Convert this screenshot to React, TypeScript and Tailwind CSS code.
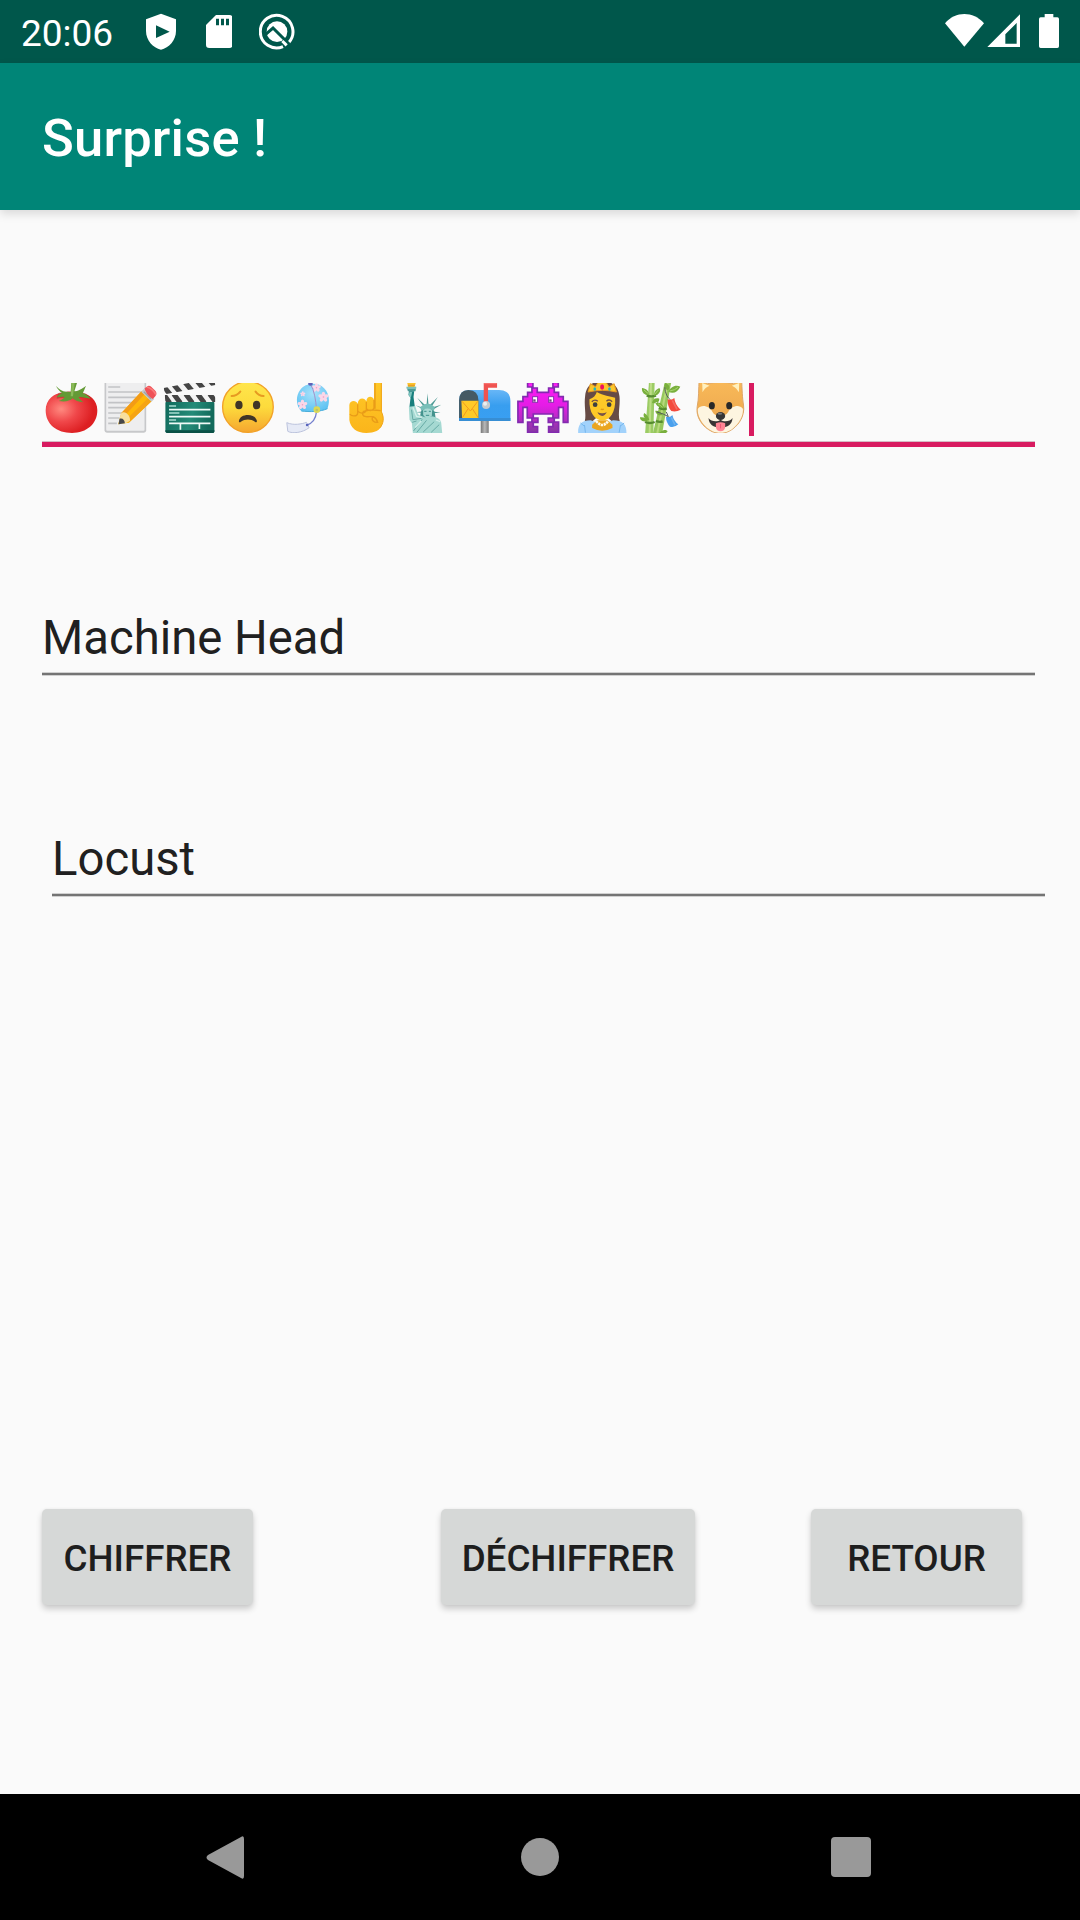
import React from "react";

function Emoji({ vb, children, label }: { vb: string; label: string; children: React.ReactNode }) {
  return (
    <svg viewBox={vb} role="img" aria-label={label} className="block h-[50px] w-[58.8px] shrink-0">
      {children}
    </svg>
  );
}

function Tomato() {
  return (
    <Emoji vb="36 39 176.4 150" label="tomato">
      <defs>
        <radialGradient id="tom" cx="0.3" cy="0.42" r="0.62">
          <stop offset="0" stopColor="#ff8a80" />
          <stop offset="0.5" stopColor="#f0474a" />
          <stop offset="1" stopColor="#dd1f22" />
        </radialGradient>
      </defs>
      <path d="M47 121C47 88 73 69 98 68C110 64 132 64 147 68C177 70 202 89 202 121C202 162 170 189 126 189C81 189 47 164 47 121Z" fill="url(#tom)" />
      <path d="M84 70C100 64 140 62 166 70C176 77 180 80 183 86C150 80 110 80 80 86Z" fill="#9c2a1c" opacity="0.45" />
      <path d="M78 48C88 58 98 66 110 65L122 66L124 39H141L133 64C142 64 156 57 168 47C163 60 160 66 158 70C168 72 177 80 182 86C167 84 157 80 146 81C149 87 154 92 160 97C146 96 135 91 128 85C119 94 104 96 86 93C94 90 101 86 104 81C96 80 87 81 79 82C84 75 91 71 96 69C88 63 82 56 78 48Z" fill="#639a35" />
      <path d="M125 39H134L129 79H122Z" fill="#8ab957" />
    </Emoji>
  );
}

function Memo() {
  return (
    <Emoji vb="212.4 39 176.4 150" label="memo">
      <rect x="223" y="25" width="125" height="163" rx="7" fill="#c7c8ca" />
      <rect x="228" y="25" width="115" height="157" rx="3" fill="#eeeeef" />
      <path d="M234 51H270M234 66H333M234 82H318M234 98H305M234 113H290M234 129H276M234 144H268M234 160H260" stroke="#c2c3c6" strokeWidth="5" />
      <path d="M334 64L364 94L296 158L264 163L273 130Z" fill="#ffb70a" />
      <path d="M334 64L343 73L282 139L273 130Z" fill="#f39b16" />
      <path d="M354 84L364 94L296 158L289 148Z" fill="#f5a414" />
      <path d="M273 130C284 120 302 137 299 153L286 160L266 163L267 149Z" fill="#f8df9d" />
      <path d="M268 146C277 143 284 150 284 160L265 163Z" fill="#474749" />
      <path d="M341 57L372 87L364 95L333 65Z" fill="#c5c9cb" />
      <path d="M341 65L362 86" stroke="#9ea4a7" strokeWidth="4" />
      <path d="M343 55L350 50C354 46 359 47 363 50L376 63C380 67 379 74 376 78L368 87C358 83 346 68 343 55Z" fill="#ef5258" />
      <path d="M350 51C364 55 372 63 377 74" fill="none" stroke="#fa7b7b" strokeWidth="5" />
    </Emoji>
  );
}

function Clapper() {
  return (
    <Emoji vb="388.8 39 176.4 150" label="clapper board">
      <defs>
        <linearGradient id="clap" x2="1" y2="0.2">
          <stop stopColor="#10695b" /><stop offset="0.6" stopColor="#248b78" /><stop offset="1" stopColor="#126a5b" />
        </linearGradient>
        <clipPath id="bar1"><path d="M400 54L550 24L555 45L404 73Z" /></clipPath>
        <clipPath id="bar2"><path d="M403 75H555V96H405Z" /></clipPath>
      </defs>
      <rect x="405" y="93" width="147" height="96" rx="6" fill="url(#clap)" />
      <path d="M405 181H552V185Q551 189 547 189H410Q406 189 405 184Z" fill="#0a5146" />
      <g clipPath="url(#bar1)">
        <path d="M395 20H560V80H395Z" fill="#f4f4f4" />
        <path d="M400 50L421 75M430 44L452 70M464 37L487 65M498 31L521 58M532 24L555 51" stroke="#444" strokeWidth="15" />
      </g>
      <g clipPath="url(#bar2)">
        <path d="M400 75H557V98H400Z" fill="#f4f4f4" />
        <path d="M399 72L418 99M430 72L450 99M466 72L486 99M502 72L522 99M538 72L558 99" stroke="#444" strokeWidth="15" />
      </g>
      <path d="M416 108H437M416 129H447M416 150H437" stroke="#a9ddd2" strokeWidth="5" />
      <path d="M416 119H540M416 140H540M416 160H540M450 160V179M507 160V177" stroke="#effaf7" strokeWidth="5" fill="none" />
    </Emoji>
  );
}

function Worried() {
  return (
    <Emoji vb="25.2 39 176.4 150" label="worried face">
      <defs>
        <linearGradient id="face" x2="0" y2="1">
          <stop stopColor="#ffe64d" /><stop offset="0.5" stopColor="#fddb3c" /><stop offset="1" stopColor="#f5a62f" />
        </linearGradient>
      </defs>
      <circle cx="115" cy="111" r="76" fill="url(#face)" stroke="#f2a127" strokeWidth="4" />
      <path d="M66 78Q82 78 92 65M138 65Q147 78 162 78" fill="none" stroke="#e79a21" strokeWidth="6" strokeLinecap="round" />
      <ellipse cx="88" cy="105" rx="11" ry="13" fill="#403527" />
      <ellipse cx="141" cy="105" rx="11" ry="13" fill="#403527" />
      <path d="M88 153C90 141 101 135 115 135C129 135 140 142 142 153C142 157 139 158 136 155C124 146 106 146 94 155C91 158 87 157 88 153Z" fill="#403527" />
    </Emoji>
  );
}

function Flower({ x, y, s = 1 }: { x: number; y: number; s?: number }) {
  return (
    <g transform={`translate(${x} ${y}) scale(${s})`} fill="#fad7e8">
      <ellipse cy="-8" rx="5.5" ry="8" />
      <ellipse cy="-8" rx="5.5" ry="8" transform="rotate(72)" />
      <ellipse cy="-8" rx="5.5" ry="8" transform="rotate(144)" />
      <ellipse cy="-8" rx="5.5" ry="8" transform="rotate(216)" />
      <ellipse cy="-8" rx="5.5" ry="8" transform="rotate(288)" />
      <circle r="2.5" fill="#ee9fc4" />
    </g>
  );
}

function WindChime() {
  return (
    <Emoji vb="201.6 39 176.4 150" label="wind chime">
      <defs>
        <radialGradient id="chime" cx="0.5" cy="0.35" r="0.65">
          <stop stopColor="#a9e2fb" /><stop offset="1" stopColor="#5fc3f2" />
        </radialGradient>
      </defs>
      <path d="M275 124C258 108 257 78 271 60C286 38 325 34 343 55C358 70 361 92 353 116C330 126 300 126 275 124Z" fill="url(#chime)" />
      <path d="M275 123C300 126 330 126 353 116" stroke="#48add9" strokeWidth="3" fill="none" />
      <Flower x={278} y={104} s={0.95} />
      <Flower x={341} y={81} s={1} />
      <Flower x={320} y={53} s={0.85} />
      <Flower x={279} y={72} s={0.5} />
      <path d="M302 42C314 62 318 92 320 116" fill="none" stroke="#a490c8" strokeWidth="3" />
      <ellipse cx="302" cy="42" rx="7" ry="5" fill="#5c60b8" />
      <path d="M320 126C318 146 306 160 292 165" fill="none" stroke="#7480ce" strokeWidth="4" />
      <circle cx="321" cy="119" r="10" fill="#dbd955" />
      <circle cx="321" cy="120" r="4" fill="#b8c46a" />
      <path d="M231 158C252 167 276 162 290 157L298 173C279 188 248 192 234 184Z" fill="#e6eaf6" stroke="#bcc3dc" strokeWidth="3" />
      <circle cx="292" cy="165" r="4" fill="#5964bd" />
    </Emoji>
  );
}

function PointingUp() {
  return (
    <Emoji vb="378 39 176.4 150" label="index pointing up">
      <defs>
        <linearGradient id="hand" x2="0" y2="1">
          <stop stopColor="#ffca28" /><stop offset="1" stopColor="#fbb51b" />
        </linearGradient>
      </defs>
      <path d="M492 25H516V128C521 139 522 151 517 162C512 181 493 189 469 189C440 189 421 173 418 150L418 105C419 91 438 89 443 101C444 82 464 81 469 94C470 77 488 77 492 89Z" fill="url(#hand)" />
      <path d="M443 103V130C442 140 424 140 420 132M469 96V120C465 132 449 132 444 123M492 90V115C488 124 475 123 470 117M495 39V116M512 122C495 119 471 121 461 124C454 130 458 139 468 140C474 141 482 139 488 140C483 151 492 158 503 157C501 148 496 143 489 140" fill="none" stroke="#e99c18" strokeWidth="4" />
      <path d="M514 39V125C523 142 521 162 509 174" fill="none" stroke="#efa51c" strokeWidth="3" />
    </Emoji>
  );
}

function Liberty() {
  return (
    <Emoji vb="14.4 39 176.4 150" label="Statue of Liberty">
      <path d="M51 38L55 32H73L77 38L73 51H54Z" fill="#fdc52d" />
      <path d="M53 46H74" stroke="#e99d26" strokeWidth="4" />
      <path d="M49 50H78L76 64H53Z" fill="#4c9b96" />
      <path d="M49 54H78" stroke="#88c8c1" strokeWidth="5" />
      <path d="M56 64H72L70 81L74 112L57 117L61 83L55 75Z" fill="#187f7d" />
      <path d="M58 66H66L62 83L55 75Z" fill="#7ec5bf" />
      <path d="M112 70L115 106H109ZM81 83L107 107L102 112ZM143 81L123 112L117 107ZM76 106L106 116L103 121ZM153 104L125 121L121 114ZM76 127L103 124V129ZM151 128L125 130V124Z" fill="#4d9994" />
      <path d="M89 146C91 124 94 110 112 110C130 110 135 125 136 145Z" fill="#44938e" />
      <path d="M90 111Q112 90 134 111L131 123Q113 108 93 123Z" fill="#78bfb8" />
      <path d="M99 120Q112 110 126 120L125 136Q119 145 112 145Q104 143 99 135Z" fill="#a8d9d3" />
      <path d="M102 124H109M116 124H122M107 136H117" stroke="#3b918c" strokeWidth="3" />
      <path d="M56 110L75 108L83 132C88 138 96 137 104 142L125 139C144 143 151 149 153 158L156 189H68L65 160L58 149Z" fill="#a5d9d2" />
      <path d="M64 119L68 149L94 145M70 183L96 148M80 187L109 151M99 186L132 155M123 187L147 164M66 157L79 153" fill="none" stroke="#66aaa5" strokeWidth="3" />
      <path d="M68 112L79 139L95 142M75 173L93 153M137 150L150 155" fill="none" stroke="#d2efea" strokeWidth="4" />
    </Emoji>
  );
}

function Mailbox() {
  return (
    <Emoji vb="190.8 39 176.4 150" label="mailbox">
      <defs>
        <linearGradient id="post"><stop stopColor="#777" /><stop offset="0.5" stopColor="#b8b8b8" /><stop offset="1" stopColor="#7b7b7b" /></linearGradient>
        <linearGradient id="box" x2="0" y2="1"><stop stopColor="#67b6f7" /><stop offset="0.5" stopColor="#389eef" /><stop offset="1" stopColor="#399ff2" /></linearGradient>
      </defs>
      <path d="M271 145H295V189H271Z" fill="url(#post)" />
      <path d="M235 60H326C349 60 360 73 360 92V153H206V91Q207 60 235 60Z" fill="url(#box)" />
      <path d="M206 144H360V153H206Z" fill="#378ed4" />
      <path d="M206 91Q207 60 234 60Q264 61 264 91V144H206Z" fill="#455a64" />
      <path d="M213 92H264V144H215Z" fill="#ffca28" />
      <path d="M215 94L240 123L262 94M216 143L233 116M263 143L246 116" fill="none" stroke="#f09b1f" strokeWidth="3" />
      <path d="M280 36H320V53H293V103H280Z" fill="#ef5350" />
      <path d="M281 40H319" stroke="#f87370" strokeWidth="5" />
      <circle cx="287" cy="105" r="12" fill="#c6cbd0" />
      <circle cx="284" cy="101" r="6" fill="#eceff1" />
    </Emoji>
  );
}

function Alien() {
  return (
    <Emoji vb="367.2 39 176.4 150" label="alien monster">
      <defs>
        <linearGradient id="alien" x1="0" y1="39" x2="0" y2="189" gradientUnits="userSpaceOnUse">
          <stop stopColor="#ff1cf5" /><stop offset="0.45" stopColor="#e51ce6" /><stop offset="1" stopColor="#843aa0" />
        </linearGradient>
      </defs>
      <path d="M414 37H430V54H443V67H477V54H490V37H506V51H494V67H507V80H521V94H535V157H521V112H507V144H494V156H507V187H477V170H490V157H476V144H490V132H431V144H445V157H431V170H444V187H414V156H427V144H413V112H400V157H385V94H400V80H414V67H427V51H414Z" fill="url(#alien)" stroke="#832ab0" strokeWidth="5" />
      <rect x="429" y="80" width="15" height="17" fill="#fff" stroke="#8b30af" strokeWidth="3" />
      <rect x="477" y="80" width="15" height="17" fill="#fff" stroke="#8b30af" strokeWidth="3" />
      <rect x="431" y="88" width="7" height="7" fill="#754083" />
      <rect x="479" y="88" width="7" height="7" fill="#754083" />
    </Emoji>
  );
}

function Princess() {
  return (
    <Emoji vb="3.6 39 176.4 150" label="princess">
      <path d="M45 154C50 132 42 108 46 78C49 47 67 34 97 34C128 34 145 47 149 79C152 107 143 133 150 154H126L115 144H79L68 154Z" fill="#674b45" />
      <path d="M25 189C24 162 36 151 62 151L97 163L130 151C158 151 170 163 170 189Z" fill="#a2d2fb" />
      <path d="M44 165L47 188M152 165L148 188M32 159L43 168M163 159L152 168" stroke="#75b7ed" strokeWidth="3" />
      <path d="M67 164L82 151H113L128 164V174Q97 190 67 174Z" fill="#eaa520" />
      <path d="M59 88C71 84 78 76 81 66C100 77 121 79 136 83C139 128 119 151 98 151C75 151 57 129 59 88Z" fill="#fec927" />
      <path d="M66 95Q75 86 84 94M110 94Q118 86 127 95" fill="none" stroke="#725047" strokeWidth="4" />
      <circle cx="76" cy="104" r="7" fill="#404040" /><circle cx="118" cy="104" r="7" fill="#404040" />
      <path d="M83 127Q97 133 111 127Q105 138 97 138Q87 137 83 127Z" fill="#795548" />
      <path d="M93 117Q97 120 102 117" stroke="#df9b17" strokeWidth="4" fill="none" />
      <path d="M79 153Q98 177 115 153" fill="none" stroke="#fffbed" strokeWidth="8" strokeDasharray="7 2" />
      <path d="M55 66L62 41L77 50L87 34H107L118 51L133 41L140 66Q98 56 55 66Z" fill="#fbc62b" stroke="#e99a20" strokeWidth="3" />
      <ellipse cx="97" cy="51" rx="6" ry="8" fill="#f1115e" />
      <ellipse cx="75" cy="57" rx="4" ry="5" fill="#26b4be" /><ellipse cx="119" cy="57" rx="4" ry="5" fill="#26b4be" />
    </Emoji>
  );
}

function Tanabata() {
  return (
    <Emoji vb="180 39 176.4 150" label="tanabata tree">
      <path d="M237 35H254L250 194H225Z" fill="#9ccc65" />
      <path d="M243 39L239 189" stroke="#bddd86" strokeWidth="6" />
      <path d="M286 30L304 35L276 193H248Z" fill="#96c75c" />
      <path d="M293 39L262 189" stroke="#b8d97c" strokeWidth="6" />
      <path d="M230 76Q243 82 258 77M225 156Q240 162 254 156M267 113Q280 120 290 115M258 153Q269 158 278 154" stroke="#558b2f" strokeWidth="7" fill="none" />
      <path d="M231 75C218 72 215 62 216 54C228 55 237 63 237 75ZM256 77C269 73 274 61 268 54C256 59 252 68 252 77ZM250 100C264 101 268 93 268 86C255 82 249 89 246 99ZM228 154C215 156 210 149 210 142C222 140 231 146 234 154ZM233 150C221 145 218 136 223 129C231 134 236 141 238 150ZM295 65C310 73 323 66 331 50C315 43 302 52 295 65ZM294 61C280 56 282 44 286 39C299 42 301 54 294 61ZM280 115C267 114 256 104 257 97C271 96 280 105 283 115ZM273 136C261 136 256 127 256 122C267 121 275 127 278 136ZM267 190C278 177 288 179 293 184C284 195 274 195 267 190Z" fill="#79af3d" />
      <path d="M235 71L222 60M254 73L265 60M299 63Q315 61 324 52M278 112L264 101" stroke="#a8d56e" strokeWidth="3" fill="none" />
      <path d="M284 52Q287 80 302 90M261 126Q281 131 295 140M289 126L295 140" fill="none" stroke="#555e59" strokeWidth="3" />
      <path d="M293 88Q306 91 313 84Q315 105 332 119Q318 127 304 123Q292 110 293 88Z" fill="#f34b3e" />
      <path d="M288 140Q302 143 307 135Q311 153 325 163Q313 174 300 170Q288 157 288 140Z" fill="#4aa0ed" />
      <path d="M307 91L321 118M304 142L315 165" stroke="#ffffff" opacity="0.18" strokeWidth="5" />
    </Emoji>
  );
}

function Dog() {
  return (
    <Emoji vb="356.4 39 176.4 150" label="dog face">
      <defs>
        <linearGradient id="dogface" x1="0" y1="39" x2="0" y2="150" gradientUnits="userSpaceOnUse">
          <stop stopColor="#f8b858" /><stop offset="1" stopColor="#eda94f" />
        </linearGradient>
      </defs>
      <path d="M387 26C391 28 402 33 412 41C434 36 468 36 490 41L514 26C516 61 516 81 520 105C525 139 504 171 474 185C460 191 441 191 426 185C396 171 376 141 381 110C386 85 385 60 387 26Z" fill="url(#dogface)" stroke="#dda667" strokeWidth="3" />
      <path d="M396 39L418 47Q402 54 397 67ZM507 39L485 47Q500 54 506 67Z" fill="#fff0bd" />
      <path d="M383 116C394 102 418 108 427 126C434 142 466 142 474 126C483 108 507 102 518 116C521 139 501 172 474 184C461 190 441 190 427 184C400 171 380 140 383 116Z" fill="#fdf5e0" />
      <ellipse cx="425" cy="107" rx="9" ry="11" fill="#282828" /><ellipse cx="477" cy="107" rx="9" ry="11" fill="#282828" />
      <path d="M415 144C422 154 440 158 451 149C462 158 480 154 487 144C486 163 473 173 451 173C429 173 416 163 415 144Z" fill="#393434" />
      <path d="M437 160Q451 154 465 160V171Q463 184 451 184Q439 184 437 171Z" fill="#ff8493" />
      <path d="M451 162V175" stroke="#ee5776" strokeWidth="3" />
      <path d="M451 147V156" stroke="#393434" strokeWidth="4" />
      <ellipse cx="451" cy="138" rx="14" ry="12" fill="#363636" />
      <ellipse cx="449" cy="131" rx="7" ry="3" fill="#777" />
    </Emoji>
  );
}

function StatusBar() {
  return (
    <header className="flex h-[63px] items-start justify-between bg-[#00574b] text-white">
      <div className="flex">
        <span className="ml-[21px] mt-[14px] w-[125px] text-[37px] leading-[40px]">20:06</span>
        <svg viewBox="438 39 90 110" className="mt-[13px] h-[36.67px] w-[30px]" fill="currentColor">
          <path fillRule="evenodd" d="M483 41L528 58V93C528 121 507 144 483 149C459 144 438 121 438 93V58ZM468 76V114L509 95Z" />
        </svg>
        <svg viewBox="617 39 80 110" className="ml-[29.7px] mt-[13px] h-[36.67px] w-[26.67px]" fill="currentColor">
          <path fillRule="evenodd" d="M647 45H687Q697 45 697 55V134Q697 144 687 144H627Q617 144 617 134V75ZM647 56V76H656V56ZM662 56V76H671V56ZM677 56V76H686V56Z" />
        </svg>
        <svg viewBox="777 39 110 110" className="ml-[26.7px] mt-[13px] h-[36.67px] w-[36.67px]" fill="none">
          <path d="M849 140A49 49 0 1 1 866 128" stroke="#fff" strokeWidth="9" />
          <circle cx="831" cy="95" r="31" fill="#fff" />
          <path d="M797 103L819 84L868 133" stroke="#00574b" strokeWidth="9" />
          <path d="M804 107L819 95L846 121" stroke="#fff" strokeWidth="4" />
          <path d="M847 123L860 136" stroke="#fff" strokeWidth="9" />
        </svg>
      </div>
      <svg viewBox="135 39 345 108" className="mr-[20px] mt-[13px] h-[36px] w-[115px]" fill="#fff">
        <path d="M135 70C167 33 219 33 252 70L193 140Z" />
        <path fillRule="evenodd" d="M360 43V141H262ZM350 69L316 103V131H350Z" />
        <path d="M434 42H460V52H472Q477 52 477 57V139Q477 144 472 144H422Q417 144 417 139V57Q417 52 422 52H434Z" />
      </svg>
    </header>
  );
}

function Field({ text, className }: { text: string; className: string }) {
  return (
    <div className={`w-[993px] ${className}`}>
      <div className="h-[62px] text-[47.25px] leading-[56px] text-[#202020]">{text}</div>
      <div className="h-[4px] border-y border-[#d0d0d0] bg-[#747474]" />
    </div>
  );
}

function Action({ text, className }: { text: string; className: string }) {
  return (
    <button className={`h-[96px] rounded-[5px] bg-[#d6d8d7] pt-[3px] text-center text-[36.75px] font-medium leading-[93px] text-[#1e1e1e] shadow-[0_4px_6px_rgba(0,0,0,0.19),0_0_3px_rgba(0,0,0,0.05)] ${className}`}>
      {text}
    </button>
  );
}

export default function App() {
  return (
    <div className="flex h-[1920px] w-[1080px] flex-col overflow-hidden bg-[#fafafa] font-['Roboto',sans-serif]">
      <StatusBar />
      <div className="relative flex h-[147px] items-center bg-[#008577] pl-[42px] pt-[3px] text-[52.5px] font-medium leading-[60px] tracking-[0.2px] text-white shadow-[0_4px_9px_rgba(0,0,0,0.13)]">
        Surprise !
      </div>
      <main className="flex grow flex-col">
        <div className="ml-[42px] mt-[173px] w-[993px]">
          <div className="flex h-[58px]">
            <Tomato /><Memo /><Clapper /><Worried /><WindChime /><PointingUp />
            <Liberty /><Mailbox /><Alien /><Princess /><Tanabata /><Dog />
            <span className="ml-[1.4px] h-[53px] w-[5px] bg-[#d81b60]" />
          </div>
          <div className="h-[6px] border-t border-[#d5bcc5] bg-[#d81b60]" />
        </div>
        <Field text="Machine Head" className="ml-[42px] mt-[163px]" />
        <Field text="Locust" className="ml-[52px] mt-[155px]" />
        <div className="ml-[42px] mt-[612px] flex">
          <Action text="CHIFFRER" className="w-[211px]" />
          <Action text="DÉCHIFFRER" className="ml-[188px] w-[254px]" />
          <Action text="RETOUR" className="ml-[116px] w-[211px]" />
        </div>
      </main>
      <nav className="flex h-[126px] shrink-0 items-center bg-black">
        <svg viewBox="0 0 38 43" className="ml-[206px] h-[43px] w-[38px]" fill="#999">
          <path d="M35 1Q38 -1 38 3V40Q38 44 35 42L2 24Q-1 21.500 2 19Z" />
        </svg>
        <span className="ml-[277px] size-[38px] rounded-full bg-[#999]" />
        <span className="ml-[272px] size-[40px] rounded-[4px] bg-[#999]" />
      </nav>
    </div>
  );
}
